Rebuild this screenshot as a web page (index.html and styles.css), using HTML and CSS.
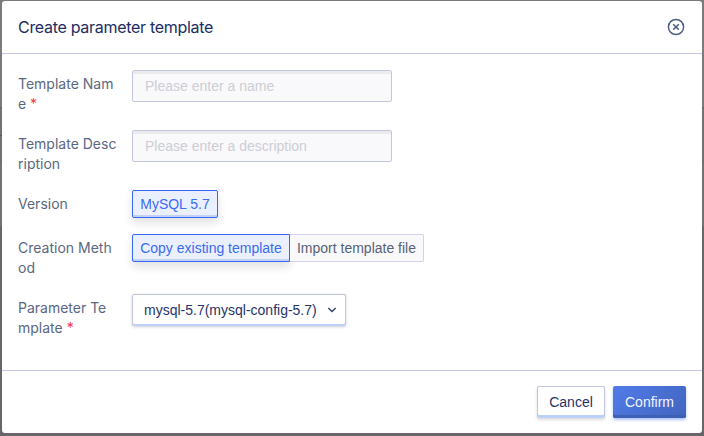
FILE: index.html
```html
<!DOCTYPE html>
<html lang="en">
<head>
<meta charset="utf-8">
<title>Create parameter template</title>
<link rel="stylesheet" href="styles.css">
</head>
<body>
<div class="modal">
  <header class="modal-header">
    <h1 class="title">Create parameter template</h1>
    <svg class="close" viewBox="0 0 18 18" width="18" height="18" fill="none" stroke="#4e5f85"><circle cx="9" cy="9" r="7.6" stroke-width="1.5"/><path d="M6.2 6.2l5.6 5.6M11.8 6.2l-5.6 5.6" stroke-width="1.6"/></svg>
  </header>
  <main class="modal-body">
    <div class="row">
      <div class="label">Template Nam<br>e <span class="required">*</span></div>
      <input class="input" placeholder="Please enter a name">
    </div>
    <div class="row">
      <div class="label">Template Desc<br>ription</div>
      <input class="input" placeholder="Please enter a description">
    </div>
    <div class="row">
      <div class="label">Version</div>
      <div class="group"><span class="option active version">MySQL 5.7</span></div>
    </div>
    <div class="row">
      <div class="label">Creation Meth<br>od</div>
      <div class="group"><span class="option active copy">Copy existing template</span><span class="option import">Import template file</span></div>
    </div>
    <div class="row">
      <div class="label">Parameter Te<br>mplate <span class="required">*</span></div>
      <div class="select"><span>mysql-5.7(mysql-config-5.7)</span><svg viewBox="0 0 10 6" width="10" height="6" fill="none" stroke="#324170" stroke-width="1.4"><path d="M1.3 1l3.7 3.5L8.7 1"/></svg></div>
    </div>
  </main>
  <footer class="modal-footer">
    <button class="button cancel">Cancel</button>
    <button class="button confirm">Confirm</button>
  </footer>
</div>
</body>
</html>
```
FILE: styles.css
```css
* { box-sizing: border-box; }
body {
  margin: 0;
  height: 436px;
  padding: 1px 2px 3px;
  overflow: hidden;
  background:
    linear-gradient(#55555a, #55555a) 0 135px / 2px 1px no-repeat,
    linear-gradient(#7b7b7c 107px, #69696e 107px, #69696e 109px, #737374 109px, #737374 161px, #66666b 161px, #66666b 162px, #737374 162px, #737374 226px, #66666b 226px);
  font: 14px/20px "Liberation Sans", Arial, sans-serif;
}
.modal {
  display: flex;
  flex-direction: column;
  height: 432px;
  background: #fff;
  border-radius: 3px;
  overflow: hidden;
}
.modal-header {
  display: flex;
  align-items: center;
  justify-content: space-between;
  height: 53px;
  padding: 0 17px 0 16px;
  border-bottom: 1px solid #c1c6dd;
}
.title {
  margin: 0;
  color: #202d63;
  font: 400 16px/24px Inter, sans-serif;
  letter-spacing: -0.3px;
}
.close { display: block; }
.modal-body {
  flex: 1;
  display: flex;
  flex-direction: column;
  gap: 16px;
  padding: 16px 16px 0;
}
.row { display: flex; align-items: flex-start; }
.label {
  width: 114px;
  padding-top: 4px;
  color: #5b6780;
  font-family: Inter, sans-serif;
  white-space: nowrap;
}
.required { color: #f5393e; }
.input {
  width: 260px;
  height: 32px;
  padding: 0 12px 1px;
  border: 1px solid #c1c6dd;
  border-radius: 2px;
  background: #f9f9fb;
  box-shadow: inset 0 3px 0 #ebebed;
  font: inherit;
}
.input::placeholder { color: #cccdd5; opacity: 1; }
.group { display: flex; }
.option {
  height: 28px;
  border: 1px solid #d0d3e7;
  border-radius: 2px;
  background: #f9f9fc;
  color: #586173;
  line-height: 27px;
  text-align: center;
  white-space: nowrap;
}
.active {
  border-color: #3667f6;
  background: #eaf0ff;
  color: #3b6bf0;
  box-shadow: inset 0 -2px 0 #c3d1f5, 0 5px 10px rgba(0, 0, 0, 0.12);
}
.version { width: 86px; }
.copy { width: 158px; border-radius: 2px 0 0 2px; }
.import { width: 134px; border-left: 0; border-radius: 0 2px 2px 0; }
.select {
  display: flex;
  align-items: center;
  justify-content: space-between;
  width: 214px;
  height: 32px;
  padding: 0 8px 1px 11px;
  border: 1px solid #c1c6dd;
  border-bottom: 0;
  border-radius: 2px;
  color: #25346a;
  box-shadow: inset 0 -2px 0 #bdd0fa, 0 1px 3px rgba(60, 60, 80, 0.25);
}
.modal-footer {
  display: flex;
  gap: 8px;
  height: 63px;
  padding: 15px 16px 0;
  border-top: 1px solid #c1c6dd;
  justify-content: flex-end;
}
.button {
  height: 32px;
  padding: 0;
  border-radius: 2px;
  font: inherit;
}
.cancel {
  width: 68px;
  padding-bottom: 1px;
  border: 1px solid #c1c6dd;
  border-bottom: 0;
  background: #fff;
  color: #25346a;
  box-shadow: inset 0 -3px 0 #bdd0fa, 0 2px 3px rgba(60, 60, 80, 0.18);
}
.confirm {
  width: 73px;
  border: 0;
  background: linear-gradient(135deg, #507be9, #4265bd);
  color: #f2f5ff;
  box-shadow: inset 0 -3px 0 #3d5fb4, 0 2px 3px rgba(54, 103, 246, 0.4);
}
```
